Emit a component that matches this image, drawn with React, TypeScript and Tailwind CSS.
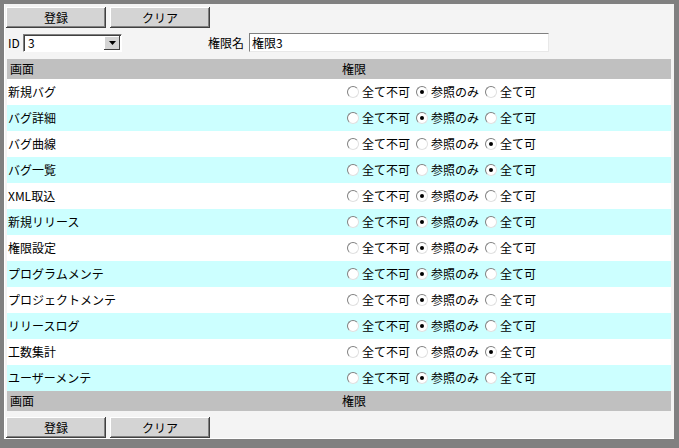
import type { ReactNode } from 'react'

type Level = 'none' | 'read' | 'all'

interface Screen {
  name: string
  level: Level
}

const screens: Screen[] = [
  { name: '新規バグ', level: 'read' },
  { name: 'バグ詳細', level: 'read' },
  { name: 'バグ曲線', level: 'all' },
  { name: 'バグ一覧', level: 'all' },
  { name: 'XML取込', level: 'read' },
  { name: '新規リリース', level: 'read' },
  { name: '権限設定', level: 'read' },
  { name: 'プログラムメンテ', level: 'read' },
  { name: 'プロジェクトメンテ', level: 'read' },
  { name: 'リリースログ', level: 'read' },
  { name: '工数集計', level: 'all' },
  { name: 'ユーザーメンテ', level: 'read' },
]

const options: { value: Level; label: string }[] = [
  { value: 'none', label: '全て不可' },
  { value: 'read', label: '参照のみ' },
  { value: 'all', label: '全て可' },
]

const Button = ({ children }: { children: ReactNode }) => (
  <button className="flex h-[21px] w-[100px] items-center justify-center bg-[#d4d4d4] text-[12px] text-black shadow-[inset_-1px_-1px_#404040,inset_1px_1px_#ffffff,inset_-2px_-2px_#808080]">
    {children}
  </button>
)

const Radio = ({ checked }: { checked: boolean }) => (
  <span className="flex h-[12px] w-[12px] items-center justify-center rounded-full border border-t-[#808080] border-l-[#808080] border-r-[#e0e0e0] border-b-[#e0e0e0] bg-white">
    {checked && <span className="h-[4px] w-[4px] rounded-full bg-black" />}
  </span>
)

const HeaderRow = () => (
  <div className="grid h-[20px] grid-cols-[335px_1fr] items-center bg-[#c0c0c0]">
    <span className="pl-[3px]">画面</span>
    <span>権限</span>
  </div>
)

export default function App() {
  return (
    <div className="h-[448px] w-[679px] bg-[#808080] pt-[4px] pl-[4px] font-['MS_UI_Gothic','Noto_Sans_CJK_JP',sans-serif] text-[12px] leading-none text-black">
      <div className="flex h-[435px] w-[670px] flex-col border-b border-l border-white bg-[#f4f4f4] pl-[1px] pr-[3px]">
        {/* ボタン */}
        <div className="mt-[3px] flex gap-[4px]">
          <Button>登録</Button>
          <Button>クリア</Button>
        </div>

        {/* ID / 権限名 */}
        <div className="mt-[5px] flex items-center">
          <span className="ml-[2px] w-[15px]">ID</span>
          <div className="flex h-[18px] w-[99px] items-center border border-t-[#808080] border-l-[#808080] border-r-white border-b-white bg-white shadow-[inset_1px_1px_#404040]">
            <span className="flex-1 pl-[4px]">3</span>
            <span className="mr-[1px] flex h-[14px] w-[16px] items-center justify-center bg-[#d4d4d4] shadow-[inset_-1px_-1px_#404040,inset_1px_1px_#ffffff]">
              <svg width="7" height="4" viewBox="0 0 7 4">
                <path d="M0 0h7L3.5 4z" fill="#000" />
              </svg>
            </span>
          </div>
          <span className="ml-[86px] w-[41px]">権限名</span>
          <div className="flex h-[19px] w-[300px] items-center border border-t-[#808080] border-l-[#808080] border-r-[#e8e8e8] border-b-[#e8e8e8] bg-white pl-[2px]">
            権限3
          </div>
        </div>

        {/* 権限テーブル */}
        <div className="mt-[7px] ml-[1px] flex flex-col">
          <HeaderRow />
          {screens.map((s, i) => (
            <div
              key={s.name}
              className={`grid h-[26px] grid-cols-[335px_1fr] items-center ${i % 2 === 1 ? 'bg-[#ccffff]' : 'bg-white'}`}
            >
              <span className="pl-[1px]">{s.name}</span>
              <div className="flex items-center pl-[5px]">
                {options.map((o) => (
                  <label key={o.value} className="mr-[6px] flex items-center gap-[3px]">
                    <Radio checked={s.level === o.value} />
                    <span>{o.label}</span>
                  </label>
                ))}
              </div>
            </div>
          ))}
          <HeaderRow />
        </div>

        <div className="mt-[6px] flex gap-[4px]">
          <Button>登録</Button>
          <Button>クリア</Button>
        </div>
      </div>
    </div>
  )
}
